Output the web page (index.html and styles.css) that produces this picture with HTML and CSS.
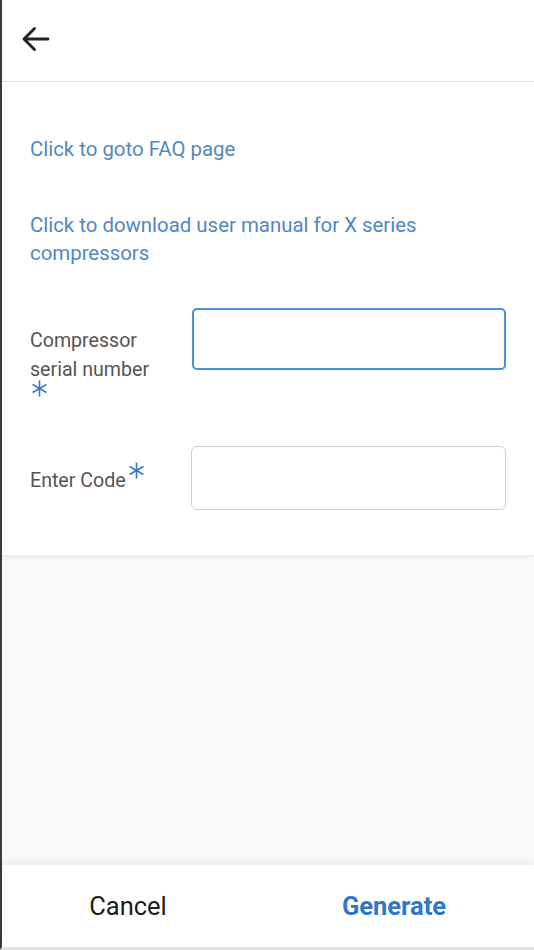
FILE: index.html
```html
<!DOCTYPE html>
<html>
<head>
<meta charset="utf-8">
<link rel="stylesheet" href="styles.css">
</head>
<body>
<div class="app">
  <header class="header">
    <svg class="back" width="36" height="36" viewBox="0 0 24 24"><path d="M20 12H4.6M11 5l-7 7 7 7" fill="none" stroke="#222" stroke-width="1.9" stroke-linecap="round" stroke-linejoin="round"/></svg>
  </header>
  <main class="content">
    <a class="link faq">Click to goto FAQ page</a>
    <a class="link manual">Click to download user manual for X series compressors</a>
    <div class="field first">
      <label class="label">Compressor serial number
        <svg class="req block" width="17" height="17" viewBox="0 0 16 16"><path d="M8 0.5v15M1.5 4.25l13 7.5M1.5 11.75l13-7.5" stroke="#2f7ad0" stroke-width="1.5" fill="none"/></svg>
      </label>
      <div class="input focused"></div>
    </div>
    <div class="field second">
      <label class="label">Enter Code<svg class="req sup" width="17" height="17" viewBox="0 0 16 16"><path d="M8 0.5v15M1.5 4.25l13 7.5M1.5 11.75l13-7.5" stroke="#2f7ad0" stroke-width="1.5" fill="none"/></svg></label>
      <div class="input"></div>
    </div>
  </main>
  <div class="filler"></div>
  <footer class="footer">
    <button class="btn cancel">Cancel</button>
    <button class="btn generate">Generate</button>
  </footer>
</div>
</body>
</html>
```
FILE: styles.css
```css
* { box-sizing: border-box; }
html, body { margin: 0; padding: 0; height: 100%; }
body { font-family: Roboto, "Noto Sans", sans-serif; background: #f7f8fa; }
.app { height: 950px; display: flex; flex-direction: column; border-left: 2px solid #3a3a3a; border-bottom: 3px solid #e2e2e2; }
.header { height: 82px; flex: none; background: #fff; border-bottom: 1px solid #e2e2e2; display: flex; align-items: center; padding-left: 16px; padding-bottom: 3px; }
.back { display: block; }
.content { background: #fff; padding: 53px 28px 45px 28px; display: flex; flex-direction: column; box-shadow: 0 2px 5px rgba(0,0,0,0.06); position: relative; z-index: 1; }
.link { color: #4f88c4; font-size: 20.4px; line-height: 28px; display: block; }
.manual { margin-top: 48px; padding-right: 50px; }
.field { display: flex; align-items: flex-start; }
.field.first { margin-top: 41px; }
.field.second { margin-top: 49px; align-items: center; }
.label { width: 161px; flex: none; color: #555; font-size: 19.6px; line-height: 29px; padding-right: 12px; }
.field.first .label { margin-top: 18px; }
.req.block { display: block; margin-top: -4px; margin-left: 1px; }
.req.sup { vertical-align: 8px; margin-left: 2px; }
.input { flex: 1; height: 64px; border: 1px solid #cfcfcf; border-radius: 6px; }
.input.focused { border: 2px solid #4a8fdb; border-radius: 5px; height: 62px; margin-left: 1px; }
.filler { flex: 1; background: #f7f8fa; }
.footer { height: 82px; flex: none; background: #fff; display: flex; box-shadow: 0 -2px 6px rgba(0,0,0,0.06); }
.btn { flex: 1; border: none; background: none; font-family: Roboto, "Noto Sans", sans-serif; font-size: 25.5px; padding: 0; }
.cancel { color: #1e1e1e; padding-right: 14px; }
.generate { color: #2f78c8; font-weight: bold; padding-right: 14px; }
```
